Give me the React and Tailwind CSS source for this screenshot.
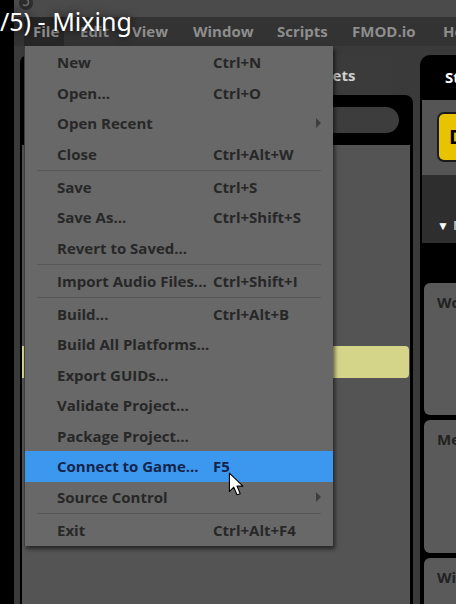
import React from 'react';

// menu bar entries, width = distance to the next entry
const menuBar = [
    { name: 'File', w: 'w-[40px]', gap: 'mr-[7px]' },
    { name: 'Edit', w: 'w-[52px]' },
    { name: 'View', w: 'w-[61px]' },
    { name: 'Window', w: 'w-[84px]' },
    { name: 'Scripts', w: 'w-[75px]' },
    { name: 'FMOD.io', w: 'w-[91px]' },
    { name: 'Help', w: 'w-[60px]' }
];

const fileMenu = [
    { label: 'New', shortcut: 'Ctrl+N' },
    { label: 'Open...', shortcut: 'Ctrl+O' },
    { label: 'Open Recent', sub: true },
    { label: 'Close', shortcut: 'Ctrl+Alt+W' },
    { sep: true },
    { label: 'Save', shortcut: 'Ctrl+S' },
    { label: 'Save As...', shortcut: 'Ctrl+Shift+S' },
    { label: 'Revert to Saved...' },
    { sep: true },
    { label: 'Import Audio Files...', shortcut: 'Ctrl+Shift+I' },
    { sep: true },
    { label: 'Build...', shortcut: 'Ctrl+Alt+B' },
    { label: 'Build All Platforms...' },
    { label: 'Export GUIDs...' },
    { label: 'Validate Project...' },
    { label: 'Package Project...' },
    { label: 'Connect to Game...', shortcut: 'F5', active: true },
    { label: 'Source Control', sub: true },
    { sep: true },
    { label: 'Exit', shortcut: 'Ctrl+Alt+F4' }
];

const cards = [
    { title: 'World', h: 'h-[132px]' },
    { title: 'Menu', h: 'h-[133px]' },
    { title: 'Wind', h: 'h-[60px]' }
];

const FileMenu = () => (
    <div className="absolute left-[24px] top-[46px] w-[309px] bg-[#686868] border-l border-[#3c3c3c] pt-[1px] pb-[1px] shadow-[2px_3px_4px_rgba(0,0,0,0.55)]">
        {fileMenu.map((item, idx) => {
            if (item.sep) {
                return (
                    <div key={idx} className="h-[2.5px] flex items-center px-[12px]">
                        <div className="h-px w-full bg-[#585858]"></div>
                    </div>
                );
            }
            return (
                <div
                    key={idx}
                    className={`relative h-[30.5px] flex items-center pl-[32px] ${item.active ? 'bg-[#3b98ee] text-[#15244a]' : 'text-[#272727]'}`}
                >
                    <span className="w-[156px] shrink-0 whitespace-nowrap">{item.label}</span>
                    {item.shortcut && <span className="whitespace-nowrap">{item.shortcut}</span>}
                    {item.sub && (
                        <div className="absolute right-[12px] top-1/2 -translate-y-1/2 w-0 h-0 border-y-[5px] border-y-transparent border-l-[5px] border-l-[#3e3e3e]"></div>
                    )}
                </div>
            );
        })}
    </div>
);

export default function App() {
    return (
        <div className="relative w-[456px] h-[604px] overflow-hidden bg-black flex font-['Open_Sans',sans-serif] font-bold text-[15px]">
            {/* black strip on the left */}
            <div className="w-[14px] shrink-0 bg-black"></div>

            <div className="flex-1 flex flex-col bg-[#3a3a3a] min-w-0">
                {/* title bar */}
                <div className="h-[17px] shrink-0 bg-[#4b4b4b] relative">
                    <svg className="absolute left-[4px] -top-[5px]" width="16" height="16" viewBox="0 0 16 16">
                        <circle cx="8" cy="8" r="7" fill="#2c2c2c" />
                        <path d="M5 9.5a3.2 3.2 0 1 0 3-5.3" stroke="#6a6a6a" strokeWidth="1.6" fill="none" />
                    </svg>
                </div>

                {/* menu bar */}
                <div className="h-[29px] shrink-0 bg-[#333] flex items-stretch pl-[10px] text-[#8e8e8e] whitespace-nowrap">
                    {menuBar.map((m, idx) => (
                        <div key={m.name} className={`${m.w} ${m.gap || ''} shrink-0 flex items-center pl-[9px] ${idx === 0 ? 'bg-[#272727]' : ''}`}>{m.name}</div>
                    ))}
                </div>

                {/* panels */}
                <div className="flex-1 flex pl-[6px] pt-[9px] gap-[7px] min-h-0">
                    {/* browser panel */}
                    <div className="w-[393px] shrink-0 flex flex-col">
                        <div className="h-[40px] flex text-[#cfcfcf]">
                            <div className="w-[128px] bg-black rounded-t-[8px] flex items-center justify-center">Routing</div>
                            <div className="w-[123px] bg-[#3b3b3b] rounded-t-[8px] flex items-center justify-center">Snapshots</div>
                            <div className="w-[122px] bg-[#3b3b3b] rounded-t-[8px] flex items-center pl-[29px]">Presets</div>
                        </div>
                        <div className="h-[50px] bg-black rounded-tr-[8px] pl-[10px] pr-[14px] pt-[12px]">
                            <div className="h-[26px] rounded-full bg-[#3d3d3d]"></div>
                        </div>
                        <div className="flex-1 bg-[#545454] border-l-2 border-r-[3px] border-black pt-[201px] pr-px">
                            <div className="h-[32px] bg-[#d5d58a] rounded-r-[4px]"></div>
                        </div>
                    </div>

                    {/* deck panel */}
                    <div className="flex-1 overflow-hidden">
                        <div className="w-[200px] h-full bg-black rounded-tl-[10px] flex flex-col">
                            <div className="h-[45px] shrink-0 flex items-center pl-[25px] text-white">Strip</div>
                            <div className="h-[75px] shrink-0 ml-[2px] bg-[#555] pl-[17px] pt-[14px]">
                                <div className="w-[60px] h-[46px] rounded-[5px] bg-[#e9c300] ring-2 ring-[#1a1a1a] flex items-center pl-[10px] text-black text-[20px]">D</div>
                            </div>
                            <div className="h-[68px] shrink-0 ml-[2px] bg-[#2e2e2e] flex items-end pb-[8px] pl-[15px] text-white text-[13px]">
                                <span className="text-[12px] mr-[4px]">▼</span>
                                <span className="text-[#bdbdbd]">Mix</span>
                            </div>
                            <div className="h-[40px] shrink-0"></div>
                            <div className="flex flex-col gap-[5px] ml-[4px]">
                                {cards.map((c) => (
                                    <div key={c.title} className={`${c.h} bg-[#5a5a5a] rounded-tl-[6px] rounded-bl-[6px] pl-[13px] pt-[8px] text-[#222]`}>{c.title}</div>
                                ))}
                            </div>
                        </div>
                    </div>
                </div>
            </div>

            <FileMenu />

            {/* video title overlay */}
            <div className="absolute left-0 top-[4px] font-['Noto_Sans',sans-serif] font-normal text-[25px] leading-[34px] text-white [text-shadow:0_0_8px_rgba(0,0,0,0.9)]">/5) - Mixing</div>

            {/* mouse cursor */}
            <svg className="absolute left-[228px] top-[472px]" width="18" height="26" viewBox="0 0 16 24">
                <path d="M1 1 L1 18 L5 14 L8 21 L11 20 L8 13 L13.5 13 Z" fill="white" stroke="black" strokeWidth="1" strokeLinejoin="round" />
            </svg>
        </div>
    );
}
